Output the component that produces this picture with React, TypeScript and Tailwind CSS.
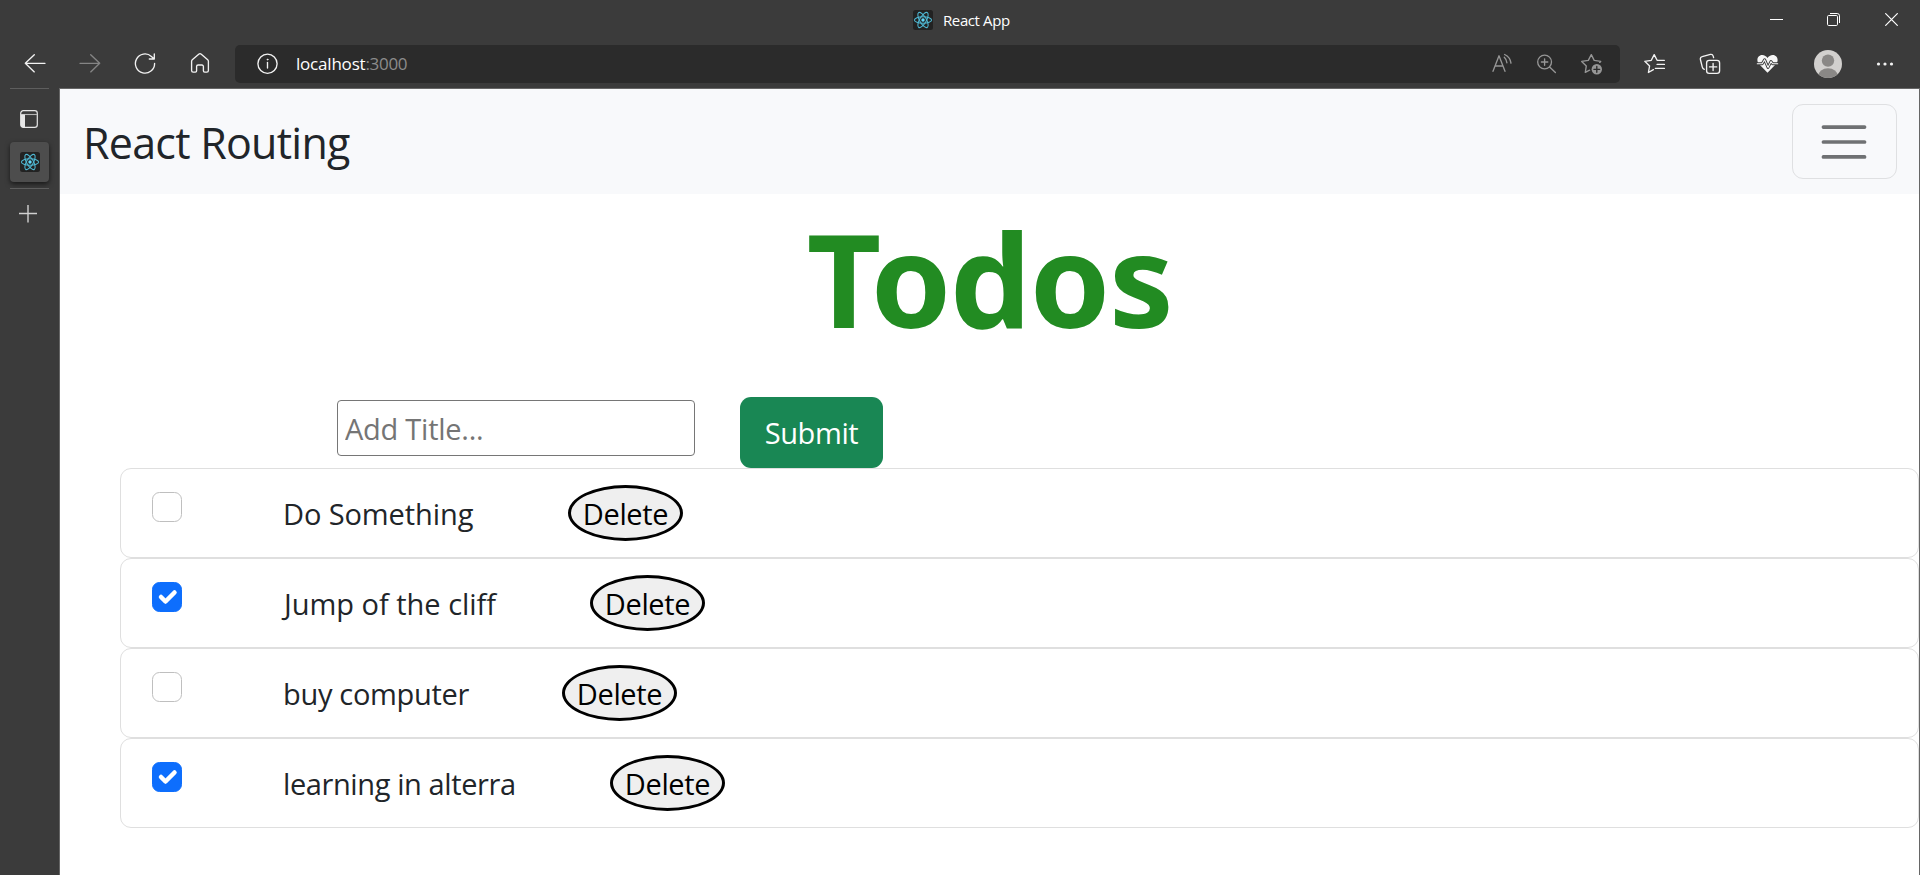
import React, { useState } from 'react';

type IconProps = { className?: string; children: React.ReactNode };

function Icon({ className = 'text-[#f2f2f2]', children }: IconProps) {
  return (
    <svg
      width="24"
      height="24"
      viewBox="0 0 24 24"
      fill="none"
      stroke="currentColor"
      strokeWidth="1.35"
      strokeLinecap="round"
      strokeLinejoin="round"
      className={`block shrink-0 ${className}`}
    >
      {children}
    </svg>
  );
}

function ReactLogo() {
  return (
    <svg width="20" height="20" viewBox="0 0 20 20" className="block shrink-0">
      <rect width="20" height="20" rx="2.5" fill="#222222" />
      <g fill="none" stroke="#4fb8d3" strokeWidth="1.05">
        <ellipse cx="10" cy="10" rx="8.6" ry="3.3" />
        <ellipse cx="10" cy="10" rx="8.6" ry="3.3" transform="rotate(60 10 10)" />
        <ellipse cx="10" cy="10" rx="8.6" ry="3.3" transform="rotate(120 10 10)" />
      </g>
      <circle cx="10" cy="10" r="1.7" fill="#61dafb" />
    </svg>
  );
}

function TitleBar() {
  return (
    <header className="flex h-[45px] shrink-0 items-start">
      <div className="ml-[913px] flex h-10 w-[857px] items-center gap-[10px]">
        <ReactLogo />
        <span className="text-[15px] leading-5 tracking-[-0.4px] text-white">React App</span>
      </div>
      <div className="flex h-[39px] items-center gap-11 text-white">
        <svg width="13" height="13" viewBox="0 0 13 13" className="block" fill="none" stroke="currentColor">
          <path d="M-1 6.5h15" />
        </svg>
        <svg width="13" height="13" viewBox="0 0 13 13" className="block" fill="none" stroke="currentColor">
          <rect x="0.5" y="2.5" width="10" height="10" rx="1.2" />
          <path d="M3 0.5h7.2a2.3 2.3 0 0 1 2.3 2.3V10" />
        </svg>
        <svg width="13" height="13" viewBox="0 0 13 13" className="ml-px block" fill="none" stroke="currentColor" strokeWidth="1.2">
          <path d="M0.3 0.3l12.4 12.4M12.7 0.3L0.3 12.7" />
        </svg>
      </div>
    </header>
  );
}

function ToolBar() {
  return (
    <div className="flex h-[43px] shrink-0 items-center pb-[5px] pl-[23px]">
      <div className="flex gap-[31px]">
        <Icon>
          <path d="M22 11.3H2.3M11.3 2.7L2.3 11.3l9 8.6" />
        </Icon>
        <Icon className="text-[#858585]">
          <path d="M2 11.3h19.7M12.7 2.7l9 8.6-9 8.6" />
        </Icon>
        <Icon>
          <path d="M21.6 11.5a9.6 9.6 0 1 1-3.2-7.1L21.3 7M21.3 2v5h-5" />
        </Icon>
        <Icon>
          <path d="M3.6 9.2a2 2 0 0 1 .7-1.5l6.4-5.5a2 2 0 0 1 2.6 0l6.4 5.5a2 2 0 0 1 .7 1.5v9.3a1.6 1.6 0 0 1-1.6 1.6h-2.1a1.3 1.3 0 0 1-1.3-1.3v-4.3a1.5 1.5 0 0 0-1.5-1.5h-3.8a1.5 1.5 0 0 0-1.5 1.5v4.3a1.3 1.3 0 0 1-1.3 1.3H5.2a1.6 1.6 0 0 1-1.6-1.6z" />
        </Icon>
      </div>
      <div className="ml-[23px] flex h-[38px] w-[1385px] shrink-0 items-center rounded-[5px] bg-[#2b2b2b] pl-5 pr-4">
        <Icon>
          <circle cx="12.5" cy="11.7" r="9.6" />
          <path d="M12.5 10.5v5.6" />
          <circle cx="12.5" cy="7.6" r="0.5" fill="currentColor" strokeWidth="0.8" />
        </Icon>
        <p className="mb-px ml-[17px] text-[17px] leading-6 text-white">
          <span className="tracking-[-0.2px]">localhost</span>
          <span className="tracking-[-0.3px] text-[#8c8c8c]">:3000</span>
        </p>
        <div className="ml-auto flex items-center text-[#9a9a9a]">
          <Icon className="text-[#969696]">
            <path d="M3 19.3L9 3.8l6 15.5M5.1 14h7.8M14.3 5.2a8.5 8.5 0 0 1 2.6 5.6M14.6 2.5a11 11 0 0 1 6.4 8.7" />
          </Icon>
          <Icon className="ml-5 text-[#969696]">
            <circle cx="10.6" cy="10" r="6.9" />
            <path d="M15.6 15l5.8 5.6M7.4 10h6.4M10.6 6.8v6.4" />
          </Icon>
          <Icon className="ml-[22px] text-[#969696]">
            <path d="M9.6 18.2l-4.3 2.2 1-6.5L1.7 9.4l6.6-1L11.3 2.6l2.9 5.8 6.5 1-1 1" />
            <circle cx="16.8" cy="17.3" r="5.2" fill="currentColor" stroke="none" />
            <path d="M16.8 14.4v5.8M13.9 17.3h5.8" stroke="#2b2b2b" />
          </Icon>
        </div>
      </div>
      <Icon className="ml-[23px] text-[#f2f2f2]">
        <path d="M10.4 17.6l-5 2.9 1.2-6.6L1.8 9.3l6.5-1 2.9-5.7 2.9 5.7h7.3M14.1 12.4h7.3M12.4 16.4h9" />
      </Icon>
      <Icon className="ml-[31px] text-[#f2f2f2]">
        <rect x="8.6" y="8.4" width="13" height="13" rx="2.6" />
        <path d="M15.1 11.3v7.2M11.5 14.9h7.2M6.3 17.3a3 3 0 0 1-2-2.2L2.4 7.5a2.4 2.4 0 0 1 1.8-2.9l8.2-2.2a2.4 2.4 0 0 1 2.8 1.7l.4 1.5" />
      </Icon>
      <Icon className="ml-[34px] text-[#f7f7f7]">
        <path
          d="M11.5 20.8L3 12.1C-.2 8.4 1.6 2.9 6.2 2.9c2.4 0 4.1 1.3 5.3 3.1 1.2-1.8 2.9-3.1 5.3-3.1 4.6 0 6.4 5.5 3.2 9.2z"
          fill="currentColor"
          stroke="none"
        />
        <path d="M0.6 11.7h5.6l2.4-4 3.4 7.7 3-5.9 1.6 2.2h6" stroke="#3b3b3b" strokeWidth="2.9" />
        <path d="M1.3 11.7h4.9l2.4-4 3.4 7.7 3-5.9 1.6 2.2h5.1" strokeWidth="1.1" />
      </Icon>
      <svg width="28" height="28" viewBox="0 0 28 28" className="ml-[34px] block shrink-0">
        <clipPath id="avatar">
          <circle cx="14" cy="14" r="14" />
        </clipPath>
        <circle cx="14" cy="14" r="14" fill="#d2d0ce" />
        <g clipPath="url(#avatar)" fill="#8a8886">
          <circle cx="14" cy="10.6" r="6.2" />
          <ellipse cx="14" cy="26" rx="9.8" ry="7.8" />
        </g>
      </svg>
      <Icon className="ml-[31px] text-[#f2f2f2]">
        <g fill="currentColor" stroke="none">
          <circle cx="5.5" cy="12" r="1.6" />
          <circle cx="12" cy="12" r="1.6" />
          <circle cx="18.5" cy="12" r="1.6" />
        </g>
      </Icon>
    </div>
  );
}

function SideTabs() {
  return (
    <aside className="flex w-[59px] shrink-0 flex-col pl-[10px]">
      <div className="h-px w-[39px] bg-[#5e5e5e]" />
      <svg width="18" height="18" viewBox="0 0 18 18" className="ml-[10px] mt-[21px] block" fill="none" stroke="#e6e6e6">
        <rect x="0.7" y="0.7" width="16.6" height="16.6" rx="2.6" strokeWidth="1.2" />
        <path d="M1 4.5h16" strokeWidth="1.1" stroke="#b5b5b5" />
        <path d="M1 4.5h4v12.8H3a2 2 0 0 1-2-2z" fill="#e6e6e6" stroke="none" />
      </svg>
      <div className="mt-[14px] flex h-10 w-[39px] items-center justify-center rounded-[4px] bg-[#4d4d4d] shadow-[0_2px_5px_rgba(0,0,0,0.6)]">
        <ReactLogo />
      </div>
      <div className="mt-[6px] h-px w-[39px] bg-[#5e5e5e]" />
      <svg width="18" height="18" viewBox="0 0 18 18" className="ml-[9px] mt-[16px] block" stroke="#d0d0d0" strokeWidth="1.4">
        <path d="M0 8.5h18M9 0v17.5" />
      </svg>
    </aside>
  );
}

type Todo = { id: number; title: string; done: boolean; fit: string };

const initialTodos: Todo[] = [
  { id: 1, title: 'Do Something', done: false, fit: 'w-[191px] tracking-[-0.1px]' },
  { id: 2, title: 'Jump of the cliff', done: true, fit: 'w-[213px] pl-px tracking-[-0.02px]' },
  { id: 3, title: 'buy computer', done: false, fit: 'w-[185px] tracking-[-0.32px]' },
  { id: 4, title: 'learning in alterra', done: true, fit: 'w-[233px] tracking-[-0.4px]' },
];

function TodoRow({ todo, onToggle, onDelete }: { todo: Todo; onToggle: () => void; onDelete: () => void }) {
  return (
    <li className="flex h-[90px] items-center rounded-[11px] border border-[#dfdfdf] bg-white pl-[31px]">
      <button
        type="button"
        role="checkbox"
        aria-checked={todo.done}
        onClick={onToggle}
        className={`mb-3 size-[30px] shrink-0 rounded-[7.5px] border ${
          todo.done ? 'border-[#0d6efd] bg-[#0d6efd]' : 'border-[#bfbfbf] bg-white'
        }`}
      >
        {todo.done && (
          <svg viewBox="0 0 20 20" className="-m-px block size-[30px]">
            <path d="M6 10l3 3l6-6" fill="none" stroke="#fff" strokeWidth="3" strokeLinecap="round" strokeLinejoin="round" />
          </svg>
        )}
      </button>
      <span className={`ml-[101px] shrink-0 whitespace-nowrap text-[29px] leading-[45px] ${todo.fit}`}>{todo.title}</span>
      <button
        type="button"
        onClick={onDelete}
        className="ml-[94px] h-14 w-[115px] shrink-0 rounded-[50%] border-[3px] border-black bg-[#efefef] text-[29px] leading-[45px] tracking-[-0.35px] text-black"
      >
        Delete
      </button>
    </li>
  );
}

export default function App() {
  const [todos, setTodos] = useState(initialTodos);
  const [title, setTitle] = useState('');

  const submit = (e: React.FormEvent) => {
    e.preventDefault();
    if (!title.trim()) return;
    setTodos([...todos, { id: Date.now(), title, done: false, fit: '' }]);
    setTitle('');
  };

  return (
    <div className="flex h-[875px] w-[1920px] flex-col overflow-hidden bg-[#3b3b3b] font-['Open_Sans','Noto_Sans',sans-serif]">
      <TitleBar />
      <ToolBar />
      <div className="flex min-h-0 flex-1">
        <SideTabs />
        <main className="flex flex-1 flex-col border-l border-r border-t border-[#666666] bg-white text-[#212529]">
          <nav className="flex h-[105px] shrink-0 items-center justify-between bg-[#f8f9fb] pl-[23px] pr-[22px]">
            <a className="mt-[2px] text-[43px] leading-[56px] tracking-[-0.75px]">React Routing</a>
            <button type="button" aria-label="Menu" className="flex h-[75px] w-[105px] items-center justify-center rounded-[11px] border border-[#dfe0e2] pr-[2px]">
              <svg viewBox="0 0 30 30" className="block size-[56px]" stroke="#6f7173" strokeWidth="2" strokeLinecap="round">
                <path d="M4 7h22M4 15h22M4 23h22" />
              </svg>
            </button>
          </nav>
          <h1 className="mt-[6px] h-[197px] shrink-0 text-center font-['Noto_Sans',sans-serif] text-[129px] font-bold leading-[156px] tracking-[-1.5px] text-[#228b22]">
            Todos
          </h1>
          <form onSubmit={submit} className="flex h-[71px] shrink-0 items-start pl-[277px]">
            <input
              value={title}
              onChange={(e) => setTitle(e.target.value)}
              placeholder="Add Title..."
              className="mt-[3px] h-14 w-[358px] rounded-[4px] border border-[#767676] px-[7px] pt-px text-[29px] tracking-[-0.25px] outline-none placeholder:text-[#757575]"
            />
            <button type="submit" className="ml-[45px] h-[71px] w-[143px] rounded-[11px] bg-[#198754] text-[29px] leading-[45px] tracking-[-0.4px] text-white">
              Submit
            </button>
          </form>
          <ul className="pl-[60px]">
            {todos.map((t) => (
              <TodoRow
                key={t.id}
                todo={t}
                onToggle={() => setTodos(todos.map((o) => (o.id === t.id ? { ...o, done: !o.done } : o)))}
                onDelete={() => setTodos(todos.filter((o) => o.id !== t.id))}
              />
            ))}
          </ul>
        </main>
      </div>
    </div>
  );
}
